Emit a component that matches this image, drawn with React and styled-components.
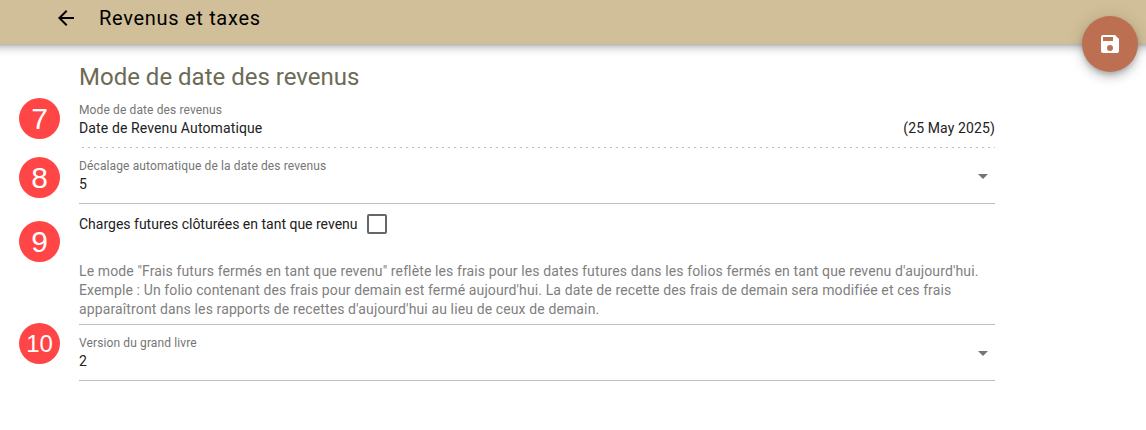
import React from 'react';
import styled, { createGlobalStyle } from 'styled-components';

const Global = createGlobalStyle`
  html, body {
    margin: 0;
    padding: 0;
    background: #fff;
    font-family: Roboto, "Liberation Sans", sans-serif;
    overflow: hidden;
  }
`;

const Page = styled.div`
  position: relative;
  width: 1146px;
  height: 430px;
  overflow: hidden;
`;

// wider than the page so that the shadow does not fade at the window edges
const Header = styled.header`
  height: 44px;
  margin: 0 -20px;
  background: #d0bf98;
  box-shadow: 0 3px 9px 0 rgba(0,0,0,.3), 0 1px 3px 0 rgba(0,0,0,.12);
  display: flex;
  align-items: center;
  padding: 0 0 9px 74px;
  box-sizing: border-box;
  gap: 21px;
`;

const BackIcon = styled.svg`
  width: 24px;
  height: 24px;
  fill: #000;
`;

const Title = styled.h1`
  margin: 0;
  font-size: 20px;
  font-weight: 400;
  line-height: 24px;
  letter-spacing: .7px;
  color: #000;
`;

const Fab = styled.button`
  position: absolute;
  top: 16px;
  left: 1082px;
  width: 56px;
  height: 56px;
  border: none;
  border-radius: 50%;
  padding: 0;
  background: #bd6f52;
  display: flex;
  align-items: center;
  justify-content: center;
  box-shadow: 0 3px 5px -1px rgba(0,0,0,.2), 0 6px 10px 0 rgba(0,0,0,.14), 0 1px 18px 0 rgba(0,0,0,.12);
  svg {
    width: 24px;
    height: 24px;
    fill: #fff;
  }
`;

const Content = styled.main`
  width: 995px;
  padding-top: 18px;
`;

const Heading = styled.h2`
  margin: 0 0 0 79px;
  font-size: 24px;
  font-weight: 400;
  line-height: 30px;
  color: #6b6b55;
`;

const Row = styled.section`
  display: grid;
  grid-template-columns: 79px 1fr;
  height: ${props => props.$height}px;
`;

const Badge = styled.div`
  width: 41px;
  height: 41px;
  margin: ${props => props.$top}px 0 0 19px;
  border-radius: 50%;
  background: #ff4545;
  color: #fff;
  font-family: "Liberation Sans", Arial, sans-serif;
  font-size: ${props => props.$small ? 24 : 30}px;
  line-height: 41px;
  text-align: center;
`;

const Field = styled.div`
  position: relative;
  height: 100%;
  box-sizing: border-box;
  padding-top: ${props => props.$pad}px;
  border-bottom: 1px solid #bdbdbd;
  ${props => props.$dotted && `
    border-bottom: none;
    background: repeating-linear-gradient(90deg, transparent 0 3px, #bdbdbd 3px 5px, transparent 5px 6px) left bottom / 100% 1px no-repeat;
  `}
`;

const Label = styled.div`
  font-size: 12px;
  line-height: 14px;
  letter-spacing: .12px;
  color: #757575;
`;

const Value = styled.div`
  display: flex;
  justify-content: space-between;
  font-size: 14px;
  line-height: 18px;
  letter-spacing: .12px;
  margin-top: ${props => props.$gap}px;
  color: #212121;
`;

const Caret = styled.span`
  position: absolute;
  right: 7px;
  top: ${props => props.$top}px;
  width: 0;
  height: 0;
  border-left: 5px solid transparent;
  border-right: 5px solid transparent;
  border-top: 5px solid #757575;
`;

const CheckLine = styled.label`
  display: flex;
  align-items: center;
  gap: 9px;
  height: 20px;
  margin-top: 10px;
  font-size: 14px;
  color: #212121;
`;

const Checkbox = styled.span`
  width: 20px;
  height: 20px;
  box-sizing: border-box;
  border: 2px solid #666;
  border-radius: 2px;
`;

const Description = styled.p`
  margin: 28px 0 0;
  font-size: 14px;
  line-height: 19px;
  letter-spacing: .12px;
  color: #808080;
  white-space: nowrap;
`;

export default function App() {
  return (
    <Page>
      <Global />
      <Header>
        <BackIcon viewBox="0 0 24 24"><path d="M20 11H7.83l5.59-5.59L12 4l-8 8 8 8 1.41-1.41L7.83 13H20v-2z" /></BackIcon>
        <Title>Revenus et taxes</Title>
      </Header>
      <Fab aria-label="Enregistrer">
        <svg viewBox="0 0 24 24"><path d="M17 3H5a2 2 0 0 0-2 2v14a2 2 0 0 0 2 2h14a2 2 0 0 0 2-2V7l-4-4zm-5 16a3 3 0 1 1 0-6 3 3 0 0 1 0 6zm3-10H5V5h10v4z" /></svg>
      </Fab>
      <Content>
        <Heading>Mode de date des revenus</Heading>
        <Row $height={56}>
          <Badge $top={6}>7</Badge>
          <Field $dotted $pad={11}>
            <Label>Mode de date des revenus</Label>
            <Value $gap={2}>
              <span>Date de Revenu Automatique</span>
              <span>(25 May 2025)</span>
            </Value>
          </Field>
        </Row>
        <Row $height={56}>
          <Badge $top={9}>8</Badge>
          <Field $pad={11}>
            <Label>Décalage automatique de la date des revenus</Label>
            <Value $gap={2}>5</Value>
            <Caret $top={26} />
          </Field>
        </Row>
        <Row $height={121}>
          <Badge $top={17}>9</Badge>
          <Field>
            <CheckLine>
              Charges futures clôturées en tant que revenu
              <Checkbox />
            </CheckLine>
            <Description>
              Le mode "Frais futurs fermés en tant que revenu" reflète les frais pour les dates futures dans les folios fermés en tant que revenu d'aujourd'hui.<br />
              Exemple : Un folio contenant des frais pour demain est fermé aujourd'hui. La date de recette des frais de demain sera modifiée et ces frais<br />
              apparaîtront dans les rapports de recettes d'aujourd'hui au lieu de ceux de demain.
            </Description>
          </Field>
        </Row>
        <Row $height={56}>
          <Badge $top={-2} $small>10</Badge>
          <Field $pad={11}>
            <Label>Version du grand livre</Label>
            <Value $gap={2}>2</Value>
            <Caret $top={26} />
          </Field>
        </Row>
      </Content>
    </Page>
  );
}
